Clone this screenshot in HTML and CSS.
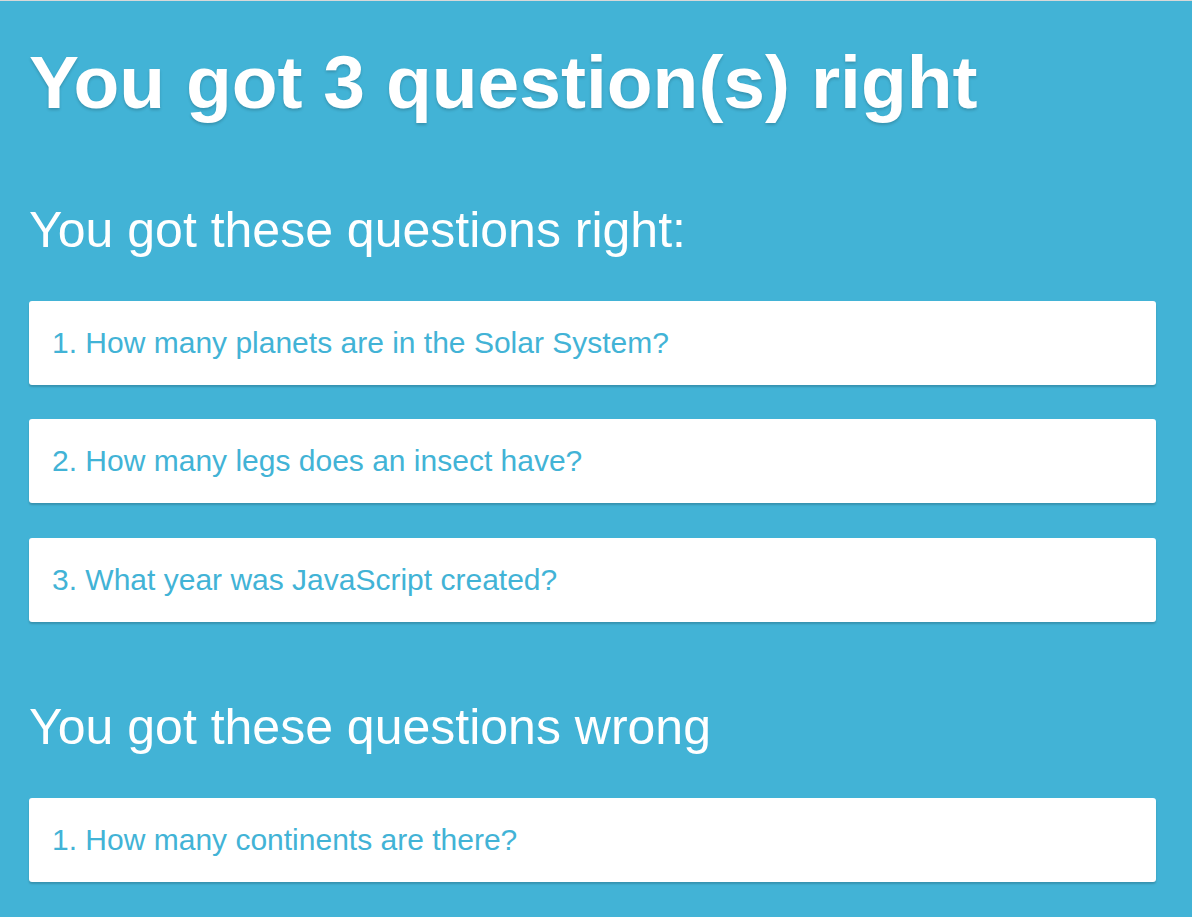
FILE: index.html
```html
<!DOCTYPE html>
<html lang="en">
<head>
<meta charset="utf-8">
<title>Quiz results</title>
<link rel="stylesheet" href="styles.css">
</head>
<body>
<main class="results">
  <h1 class="score">You got 3 question(s) right</h1>
  <section class="group">
    <h2 class="group-title">You got these questions right:</h2>
    <ul class="cards">
      <li class="card">1. How many planets are in the Solar System?</li>
      <li class="card">2. How many legs does an insect have?</li>
      <li class="card">3. What year was JavaScript created?</li>
    </ul>
  </section>
  <section class="group">
    <h2 class="group-title">You got these questions wrong</h2>
    <ul class="cards">
      <li class="card">1. How many continents are there?</li>
    </ul>
  </section>
</main>
</body>
</html>
```

FILE: styles.css
```css
html {
  background: #42b3d6;
}

body {
  margin: 0;
  border-top: 1px solid #d8d8d8;
  font-family: "Liberation Sans", Arial, sans-serif;
  color: #ffffff;
}

.results {
  padding: 43.5px 36px 40px 29px;
  display: flex;
  flex-direction: column;
}

.score {
  margin: 0 0 85.2px;
  font-size: 75px;
  line-height: 1;
  font-weight: bold;
  text-shadow: 0 2px 3px rgba(0, 0, 0, 0.18);
}

.group {
  display: flex;
  flex-direction: column;
}

.group + .group {
  margin-top: 79.7px;
}

.group-title {
  margin: 0 0 46.3px;
  font-size: 50px;
  line-height: 1;
  font-weight: normal;
}

.cards {
  list-style: none;
  margin: 0;
  padding: 0;
  display: flex;
  flex-direction: column;
  gap: 34.5px;
}

.card {
  background: #ffffff;
  color: #42b3d6;
  border-radius: 3px;
  box-shadow: 0 2px 2px rgba(0, 0, 0, 0.18);
  padding: 27px 20px 27px 23px;
  font-size: 30px;
  line-height: 1;
}
```
